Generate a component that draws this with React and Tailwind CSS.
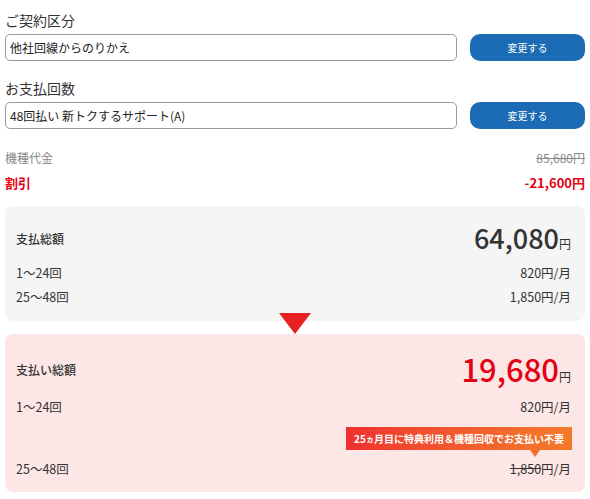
import React from 'react'

const FONT = { fontFamily: '"Noto Sans CJK JP", "Noto Sans", sans-serif' }

// Selection row: read-only field + change button
function SelectRow({ label, value }) {
  return (
    <div>
      <div className="text-[14px] leading-[20px] text-[#333]">{label}</div>
      <div className="mt-[4px] flex gap-[13px]">
        <div className="flex-1 h-[27px] px-[4px] flex items-center rounded-[5px] border border-[#9a9a9a] bg-white text-[12px] text-[#222]">
          {value}
        </div>
        <button className="w-[115px] h-[27px] rounded-[10px] bg-[#1b6cb5] text-white text-[10px] leading-none">
          変更する
        </button>
      </div>
    </div>
  )
}

function Row({ label, children, className = '' }) {
  return (
    <div className={`flex items-center justify-between h-[24px] text-[12.5px] text-[#333] ${className}`}>
      <span>{label}</span>
      <span>{children}</span>
    </div>
  )
}

export default function App() {
  return (
    <div className="w-[590px] h-[499px] bg-white px-[5px] pt-[10px]" style={FONT}>
      <SelectRow label="ご契約区分" value="他社回線からのりかえ" />
      <div className="mt-[17px]">
        <SelectRow label="お支払回数" value="48回払い 新トクするサポート(A)" />
      </div>

      {/* Price breakdown */}
      <div className="mt-[16px]">
        <div className="flex items-center justify-between h-[25px] text-[12px] text-[#888]">
          <span>機種代金</span>
          <span className="line-through">85,680円</span>
        </div>
        <div className="flex items-center justify-between h-[25px] text-[13px] font-bold text-[#e60012]">
          <span>割引</span>
          <span>-21,600円</span>
        </div>
      </div>

      {/* Regular total */}
      <div className="mt-[11px] rounded-[8px] bg-[#f5f5f5] pl-[11px] pr-[14px] pt-[15px] pb-[12px]">
        <div className="flex items-center justify-between h-[36px]">
          <span className="text-[12px] font-medium text-[#333]">支払総額</span>
          <span className="text-[#333]">
            <span className="text-[27px] font-medium leading-none">64,080</span>
            <span className="text-[12px]">円</span>
          </span>
        </div>
        <Row label="1〜24回" className="mt-[4px]">820円/月</Row>
        <Row label="25〜48回">1,850円/月</Row>
      </div>

      {/* Discounted total */}
      <div className="relative mt-[13px] rounded-[8px] bg-[#fce7e6] pl-[11px] pr-[14px] pt-[16px] pb-[11px]">
        <div className="absolute left-1/2 -translate-x-1/2 top-[-21px] w-0 h-0 border-l-[16px] border-r-[16px] border-t-[21px] border-l-transparent border-r-transparent border-t-[#e8201f]" />
        <div className="flex items-center justify-between h-[40px]">
          <span className="text-[12px] font-medium text-[#333]">支払い総額</span>
          <span className="text-[#e60012]">
            <span className="text-[31px] font-medium leading-none">19,680</span>
            <span className="text-[12px] text-[#333]">円</span>
          </span>
        </div>
        <Row label="1〜24回" className="mt-[5px]">820円/月</Row>
        <div className="mt-[8px] mb-[7px] flex justify-end -mr-[1px]">
          <div className="relative w-[226px] h-[23px] flex items-center justify-center bg-gradient-to-r from-[#ef2f2f] to-[#f47a2a] text-white text-[10px] font-bold whitespace-nowrap">
            25<span className="text-[8px]">ヵ</span>月目に特典利用＆機種回収でお支払い不要
            <div className="absolute right-[32px] bottom-[-7px] w-0 h-0 border-l-[5px] border-r-[5px] border-t-[7px] border-l-transparent border-r-transparent border-t-[#f26f2b]" />
          </div>
        </div>
        <Row label="25〜48回">
          <span className="line-through">1,850</span>円/月
        </Row>
      </div>
    </div>
  )
}
